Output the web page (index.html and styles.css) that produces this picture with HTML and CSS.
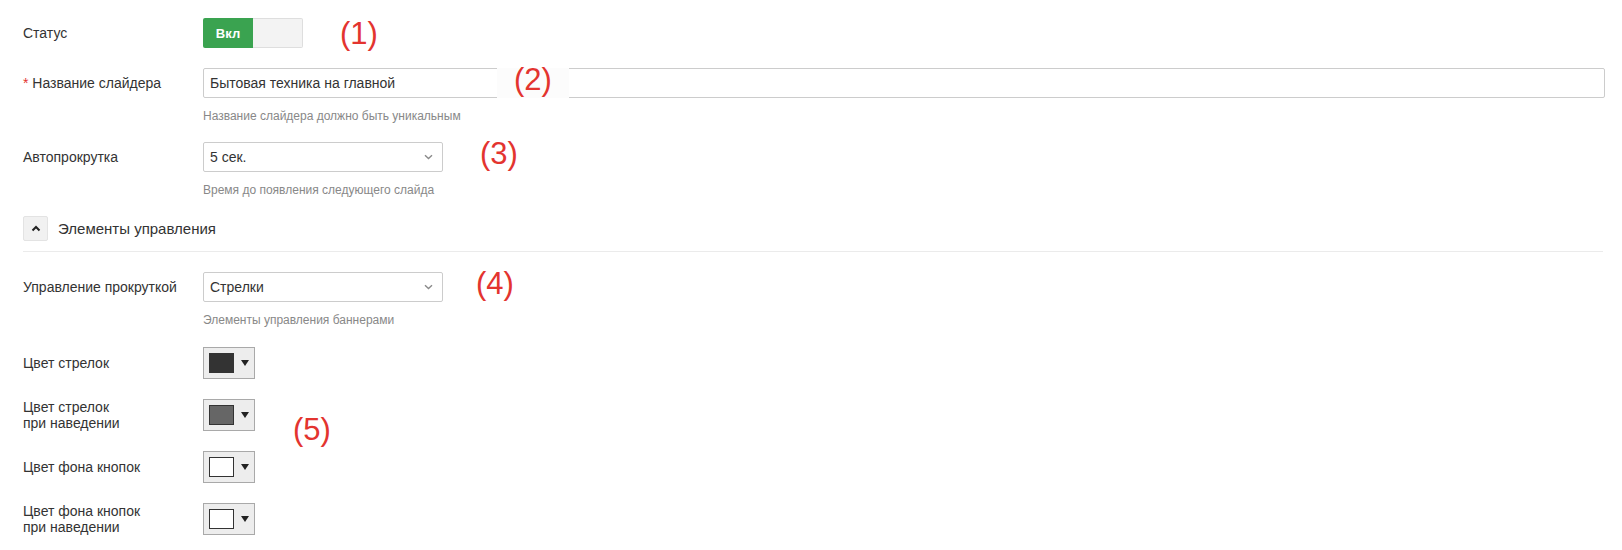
FILE: index.html
```html
<!DOCTYPE html>
<html lang="ru">
<head>
<meta charset="utf-8">
<title>Настройки слайдера</title>
<link rel="stylesheet" href="styles.css">
</head>
<body>
<div class="page">
  <div class="form">
    <div class="row">
      <div class="label">Статус</div>
      <div class="field">
        <div class="toggle"><span class="toggle-on">Вкл</span><span class="toggle-off"></span></div>
      </div>
    </div>

    <div class="row row-help">
      <div class="label"><span class="req">*</span>&nbsp;Название слайдера</div>
      <div class="field field-wide">
        <div class="input">Бытовая техника на главной</div>
        <div class="help">Название слайдера должно быть уникальным</div>
      </div>
    </div>

    <div class="row row-help">
      <div class="label">Автопрокрутка</div>
      <div class="field">
        <div class="select"><span>5 сек.</span><svg class="chev" width="9" height="6" viewBox="0 0 9 6"><path d="M1 1.2 L4.5 4.5 L8 1.2" fill="none" stroke="#8a8a8a" stroke-width="1.4"/></svg></div>
        <div class="help">Время до появления следующего слайда</div>
      </div>
    </div>

    <div class="section">
      <div class="section-btn"><svg width="10" height="7" viewBox="0 0 10 7"><path d="M1.5 5.5 L5 2 L8.5 5.5" fill="none" stroke="#222" stroke-width="2"/></svg></div>
      <div class="section-title">Элементы управления</div>
    </div>

    <div class="row row-help row-help2">
      <div class="label">Управление прокруткой</div>
      <div class="field">
        <div class="select"><span>Стрелки</span><svg class="chev" width="9" height="6" viewBox="0 0 9 6"><path d="M1 1.2 L4.5 4.5 L8 1.2" fill="none" stroke="#8a8a8a" stroke-width="1.4"/></svg></div>
        <div class="help">Элементы управления баннерами</div>
      </div>
    </div>

    <div class="row row-picker">
      <div class="label">Цвет стрелок</div>
      <div class="field">
        <div class="picker"><span class="swatch swatch-dark"></span><span class="tri"></span></div>
      </div>
    </div>

    <div class="row row-picker">
      <div class="label">Цвет стрелок<br>при наведении</div>
      <div class="field">
        <div class="picker"><span class="swatch swatch-mid"></span><span class="tri"></span></div>
      </div>
    </div>

    <div class="row row-picker">
      <div class="label">Цвет фона кнопок</div>
      <div class="field">
        <div class="picker"><span class="swatch swatch-white"></span><span class="tri"></span></div>
      </div>
    </div>

    <div class="row row-picker">
      <div class="label">Цвет фона кнопок<br>при наведении</div>
      <div class="field">
        <div class="picker"><span class="swatch swatch-white"></span><span class="tri"></span></div>
      </div>
    </div>
  </div>

  <div class="note note-1">(1)</div>
  <div class="note note-2">(2)</div>
  <div class="note note-3">(3)</div>
  <div class="note note-4">(4)</div>
  <div class="note note-5">(5)</div>
</div>
</body>
</html>
```

FILE: styles.css
```css
* { box-sizing: border-box; }
html, body { margin: 0; padding: 0; background: #fff; }
body {
  font-family: "Liberation Sans", Arial, sans-serif;
  font-size: 14px;
  color: #333;
}
.page { position: relative; width: 1622px; height: 550px; overflow: hidden; }
.form { padding: 18px 17px 0 23px; }

.row { display: flex; align-items: flex-start; margin-bottom: 20px; }
.row-help { margin-bottom: 18px; }
.row-help2 { margin-bottom: 19px; }
.label {
  width: 180px; flex: none;
  min-height: 30px;
  display: flex; align-items: center;
  line-height: 16px;
}
.row-picker .label { min-height: 32px; }
.req { color: #e3342f; }
.field { flex: none; }
.field-wide { flex: 1; }

.toggle { display: flex; width: 100px; height: 30px; }
.toggle-on {
  width: 50px; height: 30px;
  background: #3aa350; color: #fff;
  font-weight: bold; font-size: 13px;
  display: flex; align-items: center; justify-content: center;
  border-radius: 2px 0 0 2px;
}
.toggle-off {
  flex: 1; background: #f3f3f3;
  border: 1px solid #dedede; border-left: none;
  border-radius: 0 2px 2px 0;
}

.input {
  height: 30px; width: 100%;
  border: 1px solid #cccccc; border-radius: 2px;
  padding: 0 6px;
  display: flex; align-items: center;
  color: #333;
}
.select {
  width: 240px; height: 30px;
  border: 1px solid #cccccc; border-radius: 2px;
  padding: 0 9px 0 6px;
  display: flex; align-items: center; justify-content: space-between;
}
.help {
  margin-top: 10px;
  font-size: 12px; line-height: 16px;
  color: #888;
}

.section {
  display: flex; align-items: center; gap: 10px;
  padding-bottom: 10px;
  border-bottom: 1px solid #ebebeb;
  margin-bottom: 20px;
  margin-right: 2px;
}
.section-btn {
  width: 25px; height: 25px;
  background: #f1f1f1; border: 1px solid #e3e3e3; border-radius: 2px;
  display: flex; align-items: center; justify-content: center;
}
.section-title { font-size: 15px; }

.picker {
  width: 52px; height: 32px;
  background: #ededed; border: 1px solid #a9a9a9;
  display: flex; align-items: center;
  padding-left: 5px;
}
.swatch { width: 25px; height: 20px; border: 1px solid #333; }
.swatch-dark { background: #333333; }
.swatch-mid { background: #666666; }
.swatch-white { background: #ffffff; }
.tri {
  margin-left: 7px;
  width: 0; height: 0;
  border-left: 4px solid transparent;
  border-right: 4px solid transparent;
  border-top: 6px solid #222;
}

.note {
  position: absolute;
  font-family: "Liberation Sans", Arial, sans-serif;
  font-size: 31px; line-height: 31px;
  color: #e3342f;
}
.note-1 { left: 340px; top: 18px; }
.note-2 {
  left: 497px; top: 68px; width: 72px; height: 30px;
  background: #fcfcfc; text-align: center; line-height: 24px;
}
.note-3 { left: 480px; top: 138px; }
.note-4 { left: 476px; top: 268px; }
.note-5 { left: 293px; top: 414px; }
```
